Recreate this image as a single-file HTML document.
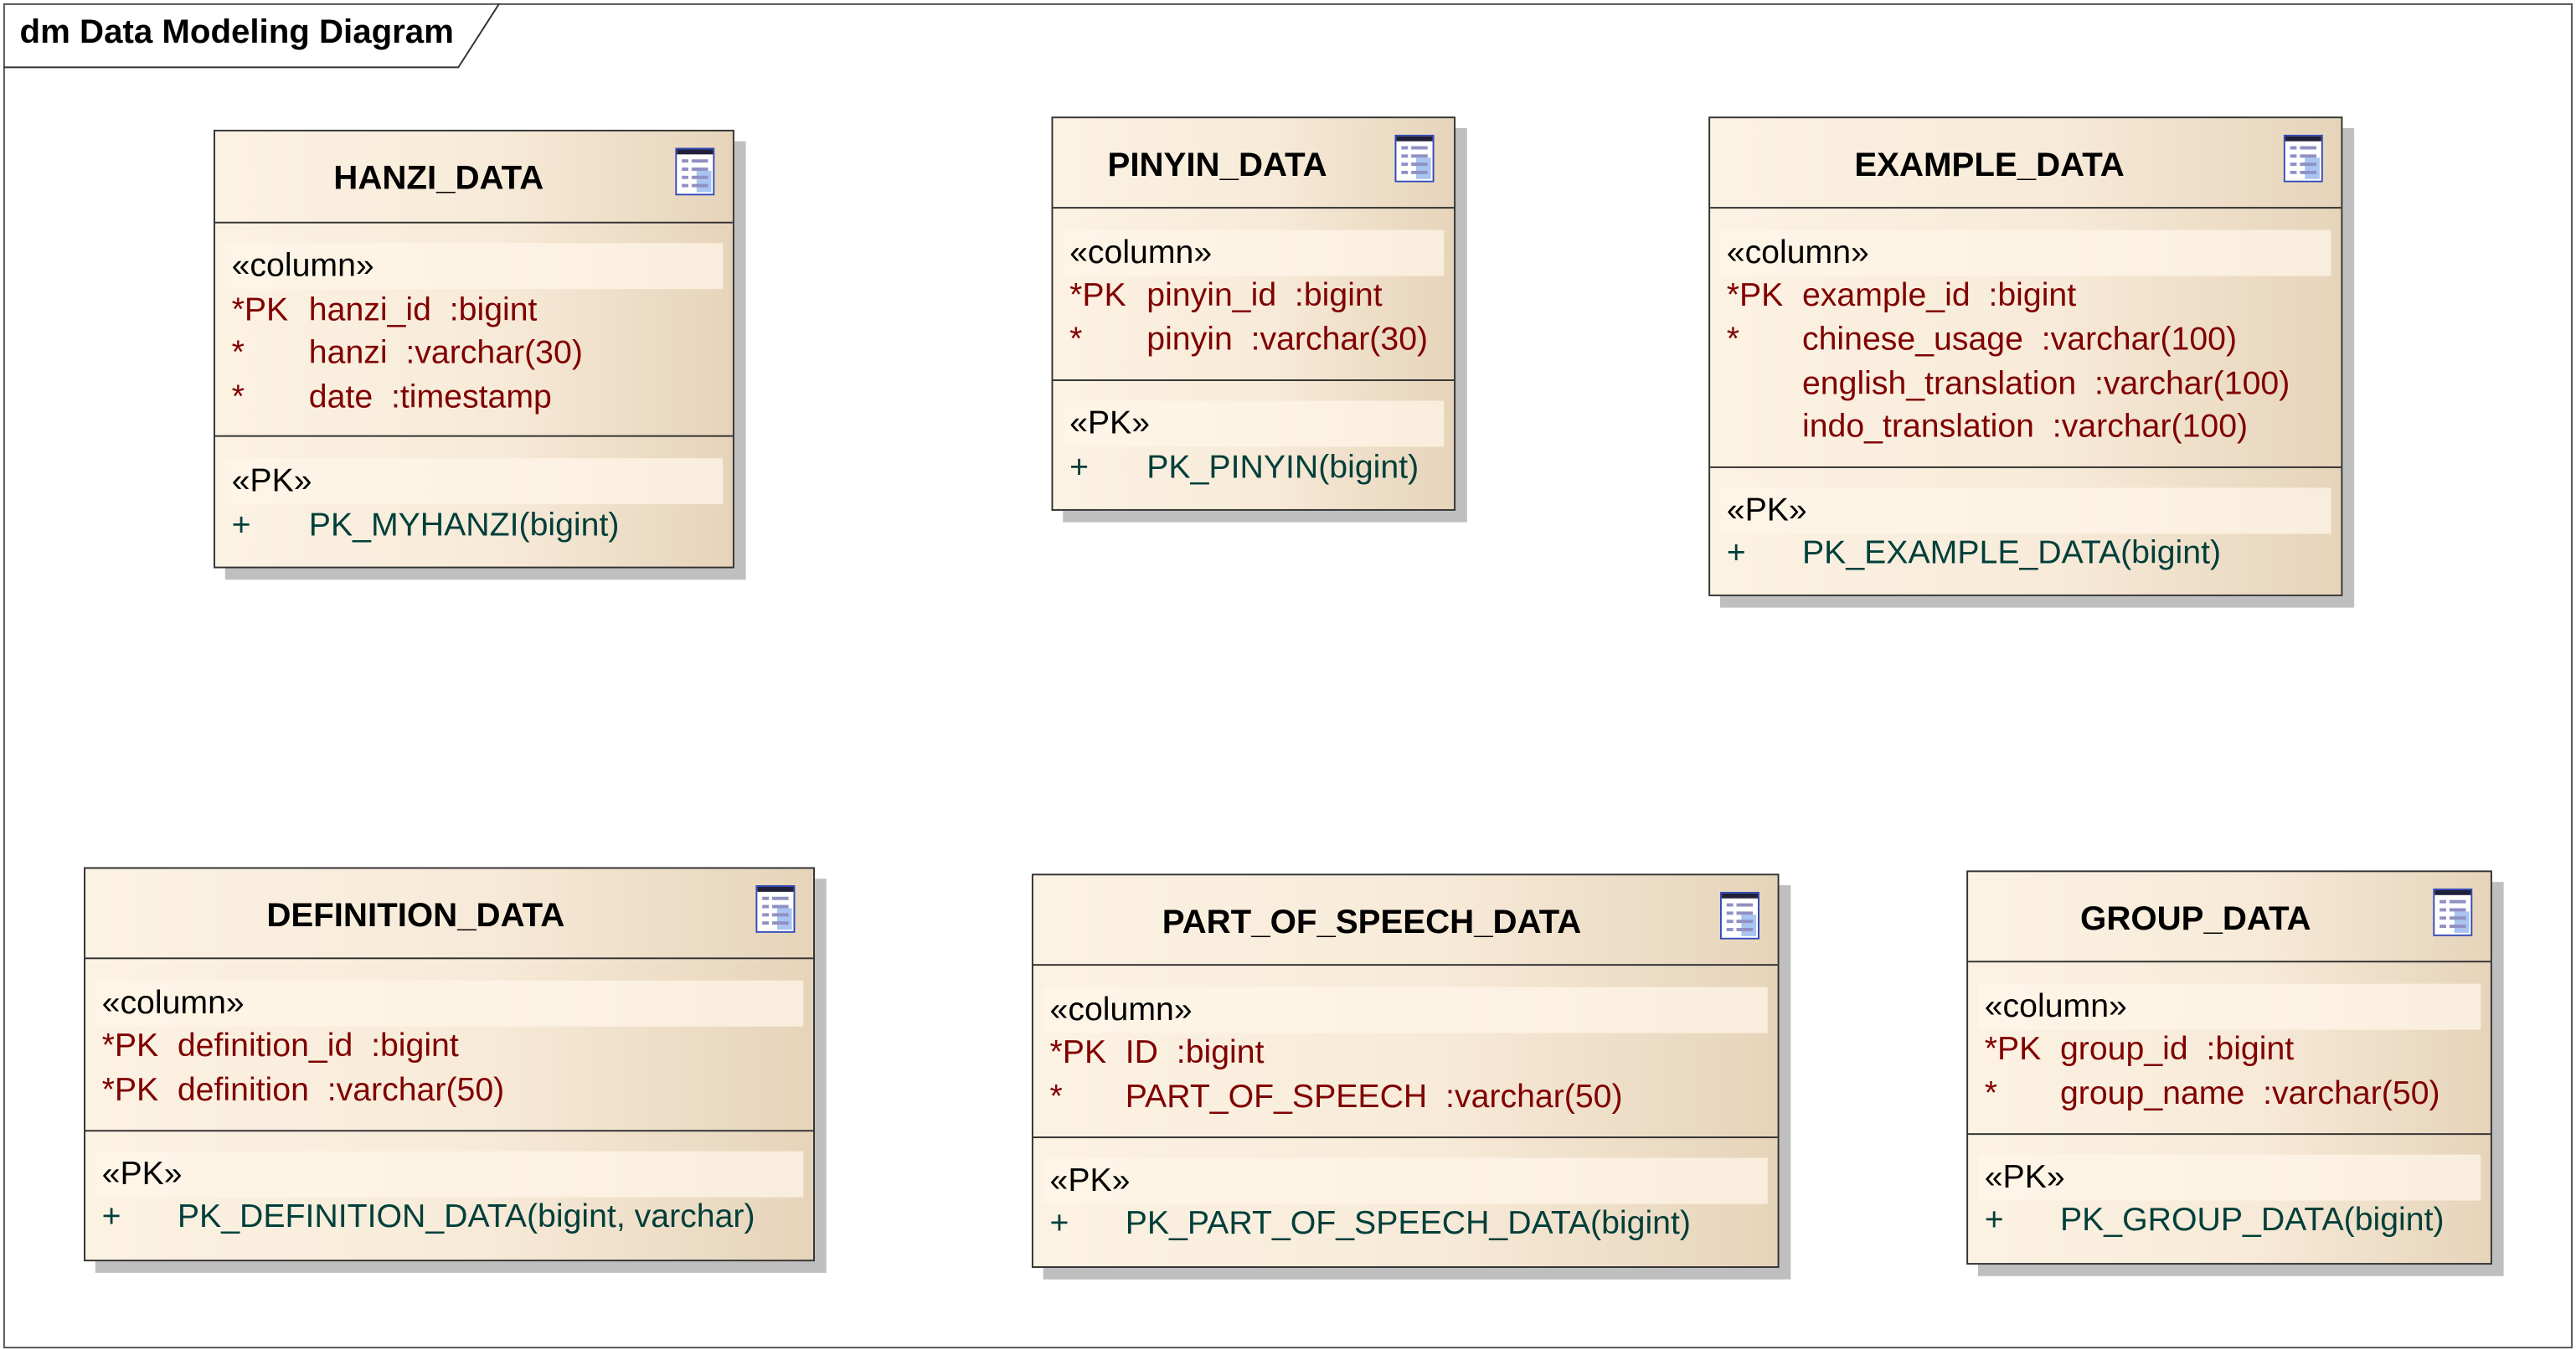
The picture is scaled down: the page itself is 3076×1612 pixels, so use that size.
<!DOCTYPE html>
<html><head><meta charset="utf-8"><style>
html,body{margin:0;padding:0;background:#fff;width:3076px;height:1612px;overflow:hidden}
#w{position:absolute;left:0;top:0;width:1568px;height:822px;transform:scale(1.9617,1.9611);transform-origin:0 0;font-family:"Liberation Sans",Arial,sans-serif}
.frame{position:absolute;left:2px;top:2px;width:1562px;height:817px;border:1px solid #555}
.tab{position:absolute;left:2px;top:2px}
.dt{position:absolute;left:12px;top:8px;font-size:20.5px;font-weight:bold;line-height:24px}
.box{position:absolute;border:1px solid #333;background:linear-gradient(to right,#fcf2e3 0%,#f7ead8 55%,#e6d4ba 100%);box-shadow:7px 7px 0 #bfbfbf}
.sep{position:absolute;left:0;right:0;height:0;border-top:1px solid #333}
.band{position:absolute;left:6px;right:6px;height:28px;background:rgba(255,246,232,.75)}
.t{position:absolute;font-size:20px;line-height:22px;white-space:pre}
.r{color:#800000}.g{color:#003f3a}.k{color:#000}
.ti{position:absolute;top:18px;font-weight:bold;font-size:20.5px;line-height:22px;text-align:center;color:#000}
.ic{position:absolute;top:10px;width:24px;height:29px}
</style></head><body><div id="w">
<div class="frame"></div>
<svg class="tab" width="310" height="42"><polyline points="0,39 277,39 302,0" fill="none" stroke="#333" stroke-width="1"/></svg>
<div class="dt">dm Data Modeling Diagram</div>

<!-- HANZI -->
<div class="box" style="left:130px;top:79px;width:315px;height:265px">
<div class="ti" style="left:0;width:272px">HANZI_DATA</div>
<svg class="ic" style="right:11px" viewBox="0 0 24 29"><rect x="0.5" y="0.5" width="23" height="28" fill="#fff" stroke="#3048b8"/><rect x="1" y="1" width="22" height="3" fill="#202038"/><rect x="13" y="14" width="9" height="13" fill="#a8c4f0"/><g fill="#9090c4"><rect x="4" y="7" width="4" height="2"/><rect x="10" y="7" width="10" height="2"/><rect x="4" y="12" width="4" height="2"/><rect x="10" y="12" width="10" height="2"/><rect x="4" y="17" width="4" height="2"/><rect x="10" y="17" width="10" height="2"/><rect x="4" y="22" width="4" height="2"/><rect x="10" y="22" width="10" height="2"/></g></svg>
<div class="sep" style="top:55px"></div>
<div class="band" style="top:68px"></div>
<div class="t k" style="left:10px;top:71px">«column»</div>
<div class="t r" style="left:10px;top:98px">*PK</div><div class="t r" style="left:57px;top:98px">hanzi_id  :bigint</div>
<div class="t r" style="left:10px;top:124px">*</div><div class="t r" style="left:57px;top:124px">hanzi  :varchar(30)</div>
<div class="t r" style="left:10px;top:151px">*</div><div class="t r" style="left:57px;top:151px">date  :timestamp</div>
<div class="sep" style="top:185px"></div>
<div class="band" style="top:199px"></div>
<div class="t k" style="left:10px;top:202px">«PK»</div>
<div class="t g" style="left:10px;top:229px">+</div><div class="t g" style="left:57px;top:229px">PK_MYHANZI(bigint)</div>
</div>

<!-- PINYIN -->
<div class="box" style="left:640px;top:71px;width:244px;height:238px">
<div class="ti" style="left:0;width:200px">PINYIN_DATA</div>
<svg class="ic" style="right:12px" viewBox="0 0 24 29"><rect x="0.5" y="0.5" width="23" height="28" fill="#fff" stroke="#3048b8"/><rect x="1" y="1" width="22" height="3" fill="#202038"/><rect x="13" y="14" width="9" height="13" fill="#a8c4f0"/><g fill="#9090c4"><rect x="4" y="7" width="4" height="2"/><rect x="10" y="7" width="10" height="2"/><rect x="4" y="12" width="4" height="2"/><rect x="10" y="12" width="10" height="2"/><rect x="4" y="17" width="4" height="2"/><rect x="10" y="17" width="10" height="2"/><rect x="4" y="22" width="4" height="2"/><rect x="10" y="22" width="10" height="2"/></g></svg>
<div class="sep" style="top:54px"></div>
<div class="band" style="top:68px"></div>
<div class="t k" style="left:10px;top:71px">«column»</div>
<div class="t r" style="left:10px;top:97px">*PK</div><div class="t r" style="left:57px;top:97px">pinyin_id  :bigint</div>
<div class="t r" style="left:10px;top:124px">*</div><div class="t r" style="left:57px;top:124px">pinyin  :varchar(30)</div>
<div class="sep" style="top:159px"></div>
<div class="band" style="top:172px"></div>
<div class="t k" style="left:10px;top:175px">«PK»</div>
<div class="t g" style="left:10px;top:202px">+</div><div class="t g" style="left:57px;top:202px">PK_PINYIN(bigint)</div>
</div>

<!-- EXAMPLE -->
<div class="box" style="left:1040px;top:71px;width:384px;height:290px">
<div class="ti" style="left:0;width:340px">EXAMPLE_DATA</div>
<svg class="ic" style="right:11px" viewBox="0 0 24 29"><rect x="0.5" y="0.5" width="23" height="28" fill="#fff" stroke="#3048b8"/><rect x="1" y="1" width="22" height="3" fill="#202038"/><rect x="13" y="14" width="9" height="13" fill="#a8c4f0"/><g fill="#9090c4"><rect x="4" y="7" width="4" height="2"/><rect x="10" y="7" width="10" height="2"/><rect x="4" y="12" width="4" height="2"/><rect x="10" y="12" width="10" height="2"/><rect x="4" y="17" width="4" height="2"/><rect x="10" y="17" width="10" height="2"/><rect x="4" y="22" width="4" height="2"/><rect x="10" y="22" width="10" height="2"/></g></svg>
<div class="sep" style="top:54px"></div>
<div class="band" style="top:68px"></div>
<div class="t k" style="left:10px;top:71px">«column»</div>
<div class="t r" style="left:10px;top:97px">*PK</div><div class="t r" style="left:56px;top:97px">example_id  :bigint</div>
<div class="t r" style="left:10px;top:124px">*</div><div class="t r" style="left:56px;top:124px">chinese_usage  :varchar(100)</div>
<div class="t r" style="left:56px;top:151px">english_translation  :varchar(100)</div>
<div class="t r" style="left:56px;top:177px">indo_translation  :varchar(100)</div>
<div class="sep" style="top:212px"></div>
<div class="band" style="top:225px"></div>
<div class="t k" style="left:10px;top:228px">«PK»</div>
<div class="t g" style="left:10px;top:254px">+</div><div class="t g" style="left:56px;top:254px">PK_EXAMPLE_DATA(bigint)</div>
</div>

<!-- DEFINITION -->
<div class="box" style="left:51px;top:528px;width:443px;height:238px">
<div class="ti" style="left:0;width:402px">DEFINITION_DATA</div>
<svg class="ic" style="right:11px" viewBox="0 0 24 29"><rect x="0.5" y="0.5" width="23" height="28" fill="#fff" stroke="#3048b8"/><rect x="1" y="1" width="22" height="3" fill="#202038"/><rect x="13" y="14" width="9" height="13" fill="#a8c4f0"/><g fill="#9090c4"><rect x="4" y="7" width="4" height="2"/><rect x="10" y="7" width="10" height="2"/><rect x="4" y="12" width="4" height="2"/><rect x="10" y="12" width="10" height="2"/><rect x="4" y="17" width="4" height="2"/><rect x="10" y="17" width="10" height="2"/><rect x="4" y="22" width="4" height="2"/><rect x="10" y="22" width="10" height="2"/></g></svg>
<div class="sep" style="top:54px"></div>
<div class="band" style="top:68px"></div>
<div class="t k" style="left:10px;top:71px">«column»</div>
<div class="t r" style="left:10px;top:97px">*PK</div><div class="t r" style="left:56px;top:97px">definition_id  :bigint</div>
<div class="t r" style="left:10px;top:124px">*PK</div><div class="t r" style="left:56px;top:124px">definition  :varchar(50)</div>
<div class="sep" style="top:159px"></div>
<div class="band" style="top:172px"></div>
<div class="t k" style="left:10px;top:175px">«PK»</div>
<div class="t g" style="left:10px;top:201px">+</div><div class="t g" style="left:56px;top:201px">PK_DEFINITION_DATA(bigint, varchar)</div>
</div>

<!-- PART_OF_SPEECH -->
<div class="box" style="left:628px;top:532px;width:453px;height:238px">
<div class="ti" style="left:0;width:412px">PART_OF_SPEECH_DATA</div>
<svg class="ic" style="right:11px" viewBox="0 0 24 29"><rect x="0.5" y="0.5" width="23" height="28" fill="#fff" stroke="#3048b8"/><rect x="1" y="1" width="22" height="3" fill="#202038"/><rect x="13" y="14" width="9" height="13" fill="#a8c4f0"/><g fill="#9090c4"><rect x="4" y="7" width="4" height="2"/><rect x="10" y="7" width="10" height="2"/><rect x="4" y="12" width="4" height="2"/><rect x="10" y="12" width="10" height="2"/><rect x="4" y="17" width="4" height="2"/><rect x="10" y="17" width="10" height="2"/><rect x="4" y="22" width="4" height="2"/><rect x="10" y="22" width="10" height="2"/></g></svg>
<div class="sep" style="top:54px"></div>
<div class="band" style="top:68px"></div>
<div class="t k" style="left:10px;top:71px">«column»</div>
<div class="t r" style="left:10px;top:97px">*PK</div><div class="t r" style="left:56px;top:97px">ID  :bigint</div>
<div class="t r" style="left:10px;top:124px">*</div><div class="t r" style="left:56px;top:124px">PART_OF_SPEECH  :varchar(50)</div>
<div class="sep" style="top:159px"></div>
<div class="band" style="top:172px"></div>
<div class="t k" style="left:10px;top:175px">«PK»</div>
<div class="t g" style="left:10px;top:201px">+</div><div class="t g" style="left:56px;top:201px">PK_PART_OF_SPEECH_DATA(bigint)</div>
</div>

<!-- GROUP -->
<div class="box" style="left:1197px;top:530px;width:318px;height:238px">
<div class="ti" style="left:0;width:277px">GROUP_DATA</div>
<svg class="ic" style="right:11px" viewBox="0 0 24 29"><rect x="0.5" y="0.5" width="23" height="28" fill="#fff" stroke="#3048b8"/><rect x="1" y="1" width="22" height="3" fill="#202038"/><rect x="13" y="14" width="9" height="13" fill="#a8c4f0"/><g fill="#9090c4"><rect x="4" y="7" width="4" height="2"/><rect x="10" y="7" width="10" height="2"/><rect x="4" y="12" width="4" height="2"/><rect x="10" y="12" width="10" height="2"/><rect x="4" y="17" width="4" height="2"/><rect x="10" y="17" width="10" height="2"/><rect x="4" y="22" width="4" height="2"/><rect x="10" y="22" width="10" height="2"/></g></svg>
<div class="sep" style="top:54px"></div>
<div class="band" style="top:68px"></div>
<div class="t k" style="left:10px;top:71px">«column»</div>
<div class="t r" style="left:10px;top:97px">*PK</div><div class="t r" style="left:56px;top:97px">group_id  :bigint</div>
<div class="t r" style="left:10px;top:124px">*</div><div class="t r" style="left:56px;top:124px">group_name  :varchar(50)</div>
<div class="sep" style="top:159px"></div>
<div class="band" style="top:172px"></div>
<div class="t k" style="left:10px;top:175px">«PK»</div>
<div class="t g" style="left:10px;top:201px">+</div><div class="t g" style="left:56px;top:201px">PK_GROUP_DATA(bigint)</div>
</div>

</div></body></html>
